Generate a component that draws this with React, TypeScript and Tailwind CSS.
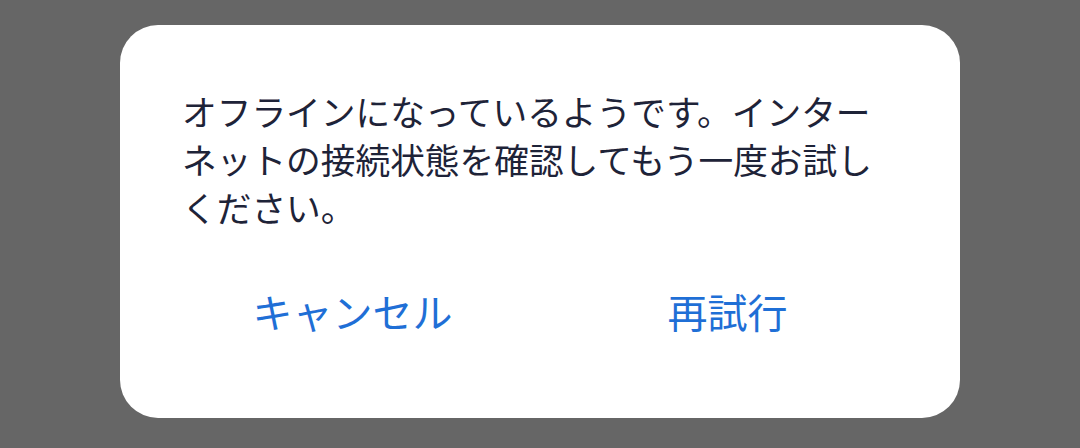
export default function App() {
  return (
    <div
      className="w-[1080px] h-[448px] bg-[#666666] pt-[25px] pl-[120px]"
      style={{ fontFamily: '"Noto Sans CJK JP", "Noto Sans", sans-serif' }}
    >
      <div className="w-[840px] h-[393px] bg-white rounded-[38px] flex flex-col">
        <p className="pt-[62px] pl-[62px] pr-[10px] text-[34.7px] leading-[48px] text-[#1e2338] whitespace-nowrap">
          オフラインになっているようです。インター
          <br />
          ネットの接続状態を確認してもう一度お試し
          <br />
          ください。
        </p>
        <div className="mt-[52px] px-[45px] grid grid-cols-2">
          <button className="text-[40px] leading-[56px] text-[#1f6fd6] text-center">キャンセル</button>
          <button className="text-[40px] leading-[56px] text-[#1f6fd6] text-center">再試行</button>
        </div>
      </div>
    </div>
  );
}
